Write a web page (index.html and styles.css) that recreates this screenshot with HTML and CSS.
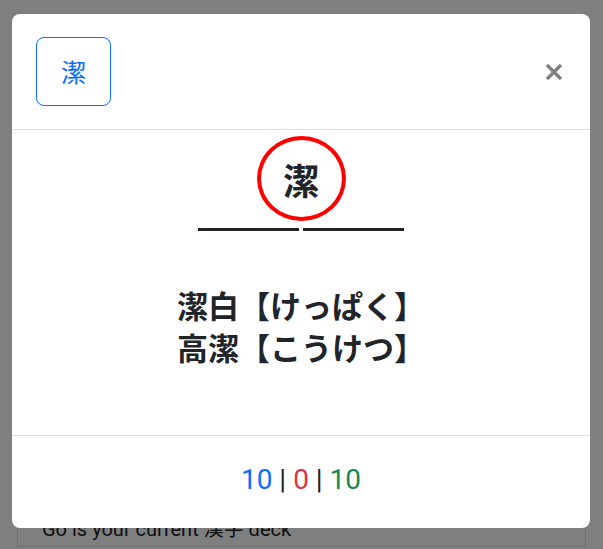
FILE: index.html
```html
<!DOCTYPE html>
<html lang="ja">
<head>
<meta charset="utf-8">
<title>潔</title>
<link rel="stylesheet" href="styles.css">
</head>
<body>
<div class="page">
  <div class="card">
    <p class="deck-text">Go is your current 漢字 deck</p>
  </div>
</div>
<div class="backdrop"></div>
<div class="modal">
  <div class="modal-header">
    <button class="kanji-btn" type="button">潔</button>
    <button class="btn-close" type="button" aria-label="Close">
      <svg width="18" height="18" viewBox="0 0 18 18"><path d="M2 2 L16 16 M16 2 L2 16" stroke="#808080" stroke-width="3.2" stroke-linecap="butt"/></svg>
    </button>
  </div>
  <div class="modal-body">
    <div class="circle"><span class="big-kanji">潔</span></div>
    <div class="blanks"><span class="blank"></span><span class="blank"></span></div>
    <div class="readings">
      <div>潔白【けっぱく】</div>
      <div>高潔【こうけつ】</div>
    </div>
  </div>
  <div class="modal-footer">
    <span class="c-blue">10</span> | <span class="c-red">0</span> | <span class="c-green">10</span>
  </div>
</div>
</body>
</html>
```
FILE: styles.css
```css
* { box-sizing: border-box; }
html, body {
  margin: 0;
  padding: 0;
}
body {
  width: 603px;
  height: 549px;
  overflow: hidden;
  position: relative;
  background: #ffffff;
  font-family: Roboto, "Noto Sans CJK JP", "Liberation Sans", sans-serif;
  color: #212529;
}
.page {
  padding: 0 17px;
  height: 549px;
  display: flex;
  flex-direction: column;
  justify-content: flex-end;
}
.card {
  border: 1px solid #dee2e6;
  border-top: none;
  height: 200px;
  display: flex;
  flex-direction: column;
  justify-content: flex-end;
  padding: 0 24px 2px;
  margin-bottom: 2px;
}
.deck-text {
  margin: 0;
  font-size: 20px;
  line-height: 30px;
  font-family: Roboto, "Noto Sans CJK JP", sans-serif;
  color: #212529;
}
.backdrop {
  position: absolute;
  inset: 0;
  background: rgba(0, 0, 0, 0.5);
}
.modal {
  position: absolute;
  left: 12px;
  top: 14px;
  width: 578px;
  height: 514px;
  background: #fff;
  border-radius: 8px;
  display: flex;
  flex-direction: column;
  overflow: hidden;
}
.modal-header {
  height: 116px;
  border-bottom: 1px solid #dee2e6;
  padding: 23px 27px 23px 24px;
  display: flex;
  align-items: center;
  justify-content: space-between;
}
.kanji-btn {
  width: 75px;
  height: 69px;
  border: 1px solid #0d6efd;
  border-radius: 8px;
  background: #fff;
  color: #0d6efd;
  font-family: "Noto Sans CJK JP", sans-serif;
  font-size: 25px;
  line-height: 1;
  padding: 0;
  display: flex;
  align-items: center;
  justify-content: center;
}
.btn-close {
  width: 18px;
  height: 18px;
  padding: 0;
  border: none;
  background: transparent;
  display: flex;
}
.modal-body {
  height: 306px;
  border-bottom: 1px solid #dee2e6;
  padding-top: 6px;
  display: flex;
  flex-direction: column;
  align-items: center;
}
.circle {
  width: 89px;
  height: 85px;
  border: 4px solid #ff0000;
  border-radius: 50%;
  display: flex;
  align-items: center;
  justify-content: center;
}
.big-kanji {
  font-family: "Noto Sans CJK JP", sans-serif;
  font-weight: 700;
  font-size: 36px;
  line-height: 1;
  color: #212529;
}
.blanks {
  margin-top: 7px;
  display: flex;
  gap: 4px;
}
.blank {
  width: 101px;
  height: 3px;
  background: #212529;
}
.readings {
  margin-top: 53px;
  font-family: "Noto Sans CJK JP", sans-serif;
  font-weight: 700;
  font-size: 31px;
  line-height: 42px;
  text-align: center;
  color: #212529;
}
.modal-footer {
  flex: 1;
  display: flex;
  align-items: center;
  justify-content: center;
  font-size: 28px;
  padding-bottom: 6px;
  white-space: pre;
  color: #212529;
}
.c-blue { color: #0d6efd; }
.c-red { color: #dc3545; }
.c-green { color: #198754; }
```
